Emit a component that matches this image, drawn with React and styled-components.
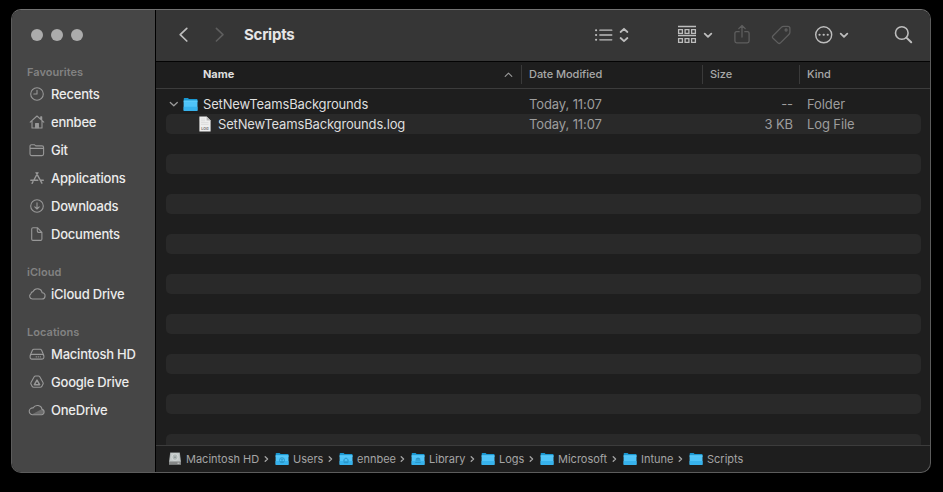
import React from "react";
import styled, { createGlobalStyle } from "styled-components";

const Global = createGlobalStyle`
  * { box-sizing: border-box; }
  html, body { margin: 0; background: #000; }
  body { font-family: Inter, "Liberation Sans", sans-serif; -webkit-font-smoothing: antialiased; overflow: hidden; }
  svg { display: block; flex: none; overflow: visible; }
`;

const Desktop = styled.div`
  width: 943px;
  height: 492px;
  padding: 9px 12px 19px 11px;
  background: #000;
`;

const Window = styled.div`
  width: 920px;
  height: 464px;
  display: flex;
  border: 1px solid #5c5c5c;
  border-top-color: #727272;
  border-radius: 10px;
  overflow: hidden;
  background: #1e1e1e;
`;

const Sidebar = styled.nav`
  width: 144px;
  flex: none;
  background: #464646;
  border-right: 1px solid #000;
`;

const Lights = styled.div`
  height: 38px;
  padding: 19px 0 0 19px;
  display: flex;
  gap: 8px;
`;

const Light = styled.span`
  width: 12px;
  height: 12px;
  border-radius: 50%;
  background: #acacac;
`;

const SectionTitle = styled.h2`
  margin: 0;
  padding: 16px 0 0 15px;
  height: 32px;
  line-height: 16px;
  font-size: 11px;
  font-weight: 600;
  letter-spacing: 0.04px;
  color: #828282;
`;

const Place = styled.div`
  height: 28px;
  padding-left: 15px;
  display: flex;
  align-items: center;
  gap: 4px;
  font-size: 13px;
  font-weight: 500;
  color: #ececec;
  white-space: nowrap;
  letter-spacing: -0.22px;
`;

const Main = styled.main`
  flex: 1;
  min-width: 0;
  display: flex;
  flex-direction: column;
`;

const Toolbar = styled.header`
  height: 52px;
  flex: none;
  padding: 0 17px 2px 22px;
  display: flex;
  align-items: center;
  background: #363636;
  border-bottom: 1px solid #040404;
`;

const Tool = styled.span`
  display: flex;
  margin-left: ${(p) => p.$gap || 0}px;
  color: ${(p) => (p.$dim ? "#5e5e5e" : "#bdbdbd")};
`;

const Disclosure = styled.span`
  display: flex;
  color: #9a9a9a;
`;

const Title = styled.h1`
  margin: 0 0 0 19px;
  width: 350px;
  font-size: 15px;
  line-height: 20px;
  font-weight: 700;
  letter-spacing: -0.25px;
  color: #e6e6e6;
`;

const columns = "365px 181px 97px 1fr";

const Header = styled.div`
  height: 27px;
  flex: none;
  display: grid;
  grid-template-columns: ${columns};
  border-bottom: 1px solid #3c3c3c;
  font-size: 11px;
  font-weight: 500;
  color: #a9a9a9;
`;

const HeadCell = styled.div`
  height: 19px;
  margin-top: 3px;
  padding: 0 0 1px 7px;
  display: flex;
  align-items: center;
  justify-content: space-between;
  border-left: 1px solid #3a3a3a;
  letter-spacing: -0.04px;
`;

const NameHead = styled(HeadCell)`
  padding: 0 8px 1px 47px;
  border-left: 0;
  font-weight: 700;
  color: #dedede;
`;

const Listing = styled.div`
  flex: 1;
  min-height: 0;
  overflow: hidden;
  padding: 5px 9px 0 10px;
`;

const Row = styled.div`
  height: 20px;
  display: grid;
  grid-template-columns: 363px 173px 91px 14px 1fr;
  align-items: center;
  border-radius: 5px;
  background: ${(p) => (p.$striped ? "#292929" : "transparent")};
  font-size: 13px;
  letter-spacing: -0.1px;
  color: #9d9d9d;
  white-space: nowrap;
`;

const NameCell = styled.div`
  display: flex;
  align-items: center;
  padding-left: ${(p) => (p.$child ? 33 : 3)}px;
  gap: ${(p) => (p.$child ? 7 : 5)}px;
  letter-spacing: -0.16px;
  color: #dedede;
`;

const Size = styled.div`
  text-align: right;
`;

const Kind = styled.div`
  grid-column: 5;
`;

const PathBar = styled.footer`
  height: 27px;
  flex: none;
  padding-left: 12px;
  display: flex;
  align-items: center;
  border-top: 1px solid #3c3c3c;
  font-size: 11px;
  color: #a5a5a5;
`;

const Crumb = styled.div`
  width: ${(p) => p.$width}px;
  flex: none;
  display: flex;
  align-items: center;
  white-space: nowrap;
  letter-spacing: 0;
`;

const CrumbLabel = styled.span`
  margin-left: 4px;
  padding-bottom: 1px;
  flex: 1;
`;

const CrumbArrow = styled.span`
  width: 11px;
  display: flex;
`;

const line = {
  fill: "none",
  stroke: "currentColor",
  strokeWidth: 1.1,
  strokeLinecap: "round",
  strokeLinejoin: "round",
};

const glyphs = {
  clock: (
    <>
      <circle cx="10" cy="10" r="6.3" />
      <path d="M10 6.2V10H6.8" />
    </>
  ),
  home: (
    <>
      <path d="M3.2 10.2 10 4l6.8 6.2M5 9v7h10V9M13.7 7V4.7h1V8" />
      <path d="M8.6 15.8v-4.2h2.8v4.2z" fill="currentColor" />
    </>
  ),
  folder: (
    <path d="M3 14.1V6.3q0-1.6 1.6-1.6h2.7l1.4 1.2h6.3q1.6 0 1.6 1.6v6.6q0 1.5-1.6 1.5H4.6Q3 15.6 3 14.1zM3 8.4h13.6" />
  ),
  apps: (
    <path
      strokeWidth="1.4"
      d="M9.1 4.7l5.8 10.5M10.9 4.7 6.9 12M6 13.7l-.9 1.6M3.8 12.2h7M13.6 12.2h2.7"
    />
  ),
  download: (
    <>
      <circle cx="10" cy="10" r="6.3" />
      <path d="M10 6.8v6M7.8 10.8l2.2 2.2 2.2-2.2" />
    </>
  ),
  doc: (
    <path d="M4.7 15V5q0-1.3 1.3-1.3h4.4l4.5 4.6V15q0 1.4-1.3 1.4H6Q4.7 16.4 4.7 15zM10.3 3.8v3.3q0 1.3 1.3 1.3h3.2" />
  ),
  cloud: (
    <path d="M5.6 15h9.1a3.1 3.1 0 0 0 .5-6.2 4.8 4.8 0 0 0-9.1-1.2 2.6 2.6 0 0 0-2.2 2.1A2.9 2.9 0 0 0 5.6 15z" />
  ),
  disk: (
    <>
      <path d="M3.3 11.2 5.4 6.3q.5-1 1.5-1h6.2q1 0 1.5 1l2.1 4.9" />
      <rect x="3.1" y="10.4" width="13.8" height="4.7" rx="1.8" />
      <path d="M9.2 12.8h5.6" strokeDasharray=".2 1.8" strokeWidth="1.2" />
    </>
  ),
  gdrive: (
    <>
      <path d="M8.6 4h2.8q.9 0 1.4.8l3.2 5.6q.5.9 0 1.7l-1.2 2.3q-.5.8-1.4.8H6.6q-.9 0-1.4-.8L4 12.1q-.5-.8 0-1.7l3.2-5.6Q7.7 4 8.6 4z" />
      <path d="M10 8.1l2.6 4.6H7.4z" strokeWidth="1.5" />
    </>
  ),
  onedrive: (
    <>
      <path d="M4.6 14.4 14.5 9.3a2.6 2.6 0 0 1 0 5.2z" fill="#6c6c6c" stroke="none" />
      <path d="M5.2 14.7h9.4a2.7 2.7 0 0 0 .5-5.3 4.9 4.9 0 0 0-9-1.5A3.4 3.4 0 0 0 5.2 14.7z" />
    </>
  ),
};

const PlaceIcon = styled.svg`
  color: #989898;
`;

function SidebarGlyph({ name }) {
  return (
    <PlaceIcon width="20" height="20" viewBox="0 0 20 20" {...line}>
      {glyphs[name]}
    </PlaceIcon>
  );
}

const sections = [
  {
    title: "Favourites",
    places: [
      ["clock", "Recents"],
      ["home", "ennbee"],
      ["folder", "Git"],
      ["apps", "Applications"],
      ["download", "Downloads"],
      ["doc", "Documents"],
    ],
  },
  { title: "iCloud", places: [["cloud", "iCloud Drive"]] },
  {
    title: "Locations",
    places: [
      ["disk", "Macintosh HD"],
      ["gdrive", "Google Drive"],
      ["onedrive", "OneDrive"],
    ],
  },
];

function Folder({ width = 14, height = 12, mark }) {
  return (
    <svg width={width} height={height} viewBox="0 0 14 12" preserveAspectRatio="none">
      <path d="M.7 3V.7q0-.7.7-.7h3.2l1 .9h7.2q.7 0 .7.7V4H.7z" fill="#1a98d2" />
      <path d="M.6 2.6h12.9v8.7q0 .6-.6.6H1.2q-.6 0-.6-.6z" fill="#4fc4f8" />
      <path d="M.6 8h12.9v3.3q0 .6-.6.6H1.2q-.6 0-.6-.6z" fill="#37b2ec" />
      <path d="M.6 2.8h12.9" stroke="#74d8ff" strokeWidth=".6" />
      {mark === "user" && (
        <g fill="none" stroke="#2790c2" strokeWidth=".8">
          <circle cx="7" cy="7.2" r="2.5" />
          <circle cx="7" cy="6.6" r=".7" />
          <path d="M5.4 8.9q1.6-1.5 3.2 0" />
        </g>
      )}
      {mark === "home" && (
        <path d="M4.3 7.2 7 4.9l2.7 2.3M5.1 7v2.7h3.8V7M7 9.6V7.9" fill="none" stroke="#2790c2" strokeWidth=".9" />
      )}
      {mark === "library" && (
        <path d="M4.8 6.2 7 4.9l2.2 1.3zM4.5 7.7h5M4.2 9.5h5.6" fill="#2790c2" stroke="#2790c2" strokeWidth=".8" />
      )}
    </svg>
  );
}

function Drive() {
  return (
    <svg width="14" height="14" viewBox="0 0 14 14">
      <path d="M2.2.6h9.6L13 9.6v2.9H1V9.6z" fill="#a4a9a9" />
      <path d="M2.8 1h8.4l1 8.3H1.8z" fill="#c4caca" />
      <ellipse cx="7" cy="5.1" rx="3" ry="3.3" fill="#b1b9b8" stroke="#dce0df" strokeWidth=".7" />
      <circle cx="7" cy="5.2" r=".8" fill="#858c8c" />
      <path d="M1 9.8h12v2.7H1z" fill="#858787" />
      <path d="M9.5 11.2h2" stroke="#e5e5e5" strokeWidth=".8" />
    </svg>
  );
}

const LogTag = styled.text`
  font: 700 3.6px Inter, sans-serif;
  letter-spacing: 0;
  fill: #727272;
`;

function LogFile() {
  return (
    <svg width="12" height="16" viewBox="0 0 12 16">
      <path d="M.4.6h7.2l4 4v10.8H.4z" fill="#eee" />
      <path d="M7.6.6v4h4z" fill="#b9b9b9" />
      <path d="M2 3h4M2 4.8h4M2 6.6h7.5M2 8.4h7.5" stroke="#d0d0d0" strokeWidth=".6" />
      <LogTag x="6" y="13.5" textAnchor="middle">LOG</LogTag>
    </svg>
  );
}

function Chevron({ w, h, d, weight = 1.5 }) {
  return (
    <svg width={w} height={h} viewBox={`0 0 ${w} ${h}`} {...line} strokeWidth={weight}>
      <path d={d} />
    </svg>
  );
}

const crumbs = [
  { label: "Macintosh HD", width: 107, mark: "drive" },
  { label: "Users", width: 64, mark: "user" },
  { label: "ennbee", width: 72, mark: "home" },
  { label: "Library", width: 70, mark: "library" },
  { label: "Logs", width: 59 },
  { label: "Microsoft", width: 83 },
  { label: "Intune", width: 66 },
  { label: "Scripts", width: 70 },
];

export default function App() {
  return (
    <Desktop>
      <Global />
      <Window>
        <Sidebar>
          <Lights>
            <Light />
            <Light />
            <Light />
          </Lights>
          {sections.map((s) => (
            <section key={s.title}>
              <SectionTitle>{s.title}</SectionTitle>
              {s.places.map(([icon, label]) => (
                <Place key={label}>
                  <SidebarGlyph name={icon} />
                  {label}
                </Place>
              ))}
            </section>
          ))}
        </Sidebar>
        <Main>
          <Toolbar>
            <Tool><Chevron w={11} h={16} d="M8.8 1.4 2.2 7.7l6.6 6.3" weight={1.7} /></Tool>
            <Tool $gap={25} $dim><Chevron w={11} h={16} d="M2.4 1.4 9 7.7l-6.6 6.3" weight={1.6} /></Tool>
            <Title>Scripts</Title>
            <Tool>
              <svg width="19" height="16" viewBox="0 0 19 16" {...line} strokeWidth="1.3">
                <path d="M5.8 3.2h12M5.8 8h12M5.8 12.8h12" />
                <path d="M2 3.2h.2M2 8h.2M2 12.8h.2" strokeWidth="2" />
              </svg>
            </Tool>
            <Tool $gap={6}><Chevron w={10} h={16} d="M1.6 5 5 1.8 8.4 5M1.6 11 5 14.2 8.4 11" weight={1.8} /></Tool>
            <Tool $gap={48}>
              <svg width="20" height="20" viewBox="0 0 20 20" {...line} strokeWidth="1.3" strokeLinecap="butt" strokeLinejoin="miter">
                <path d="M1 1.5h18M1 10.5h18" />
                <path d="M1.6 4.6h3.8v3.8H1.6zM8.1 4.6h3.8v3.8H8.1zM14.6 4.6h3.8v3.8h-3.8zM1.6 13.6h3.8v3.8H1.6zM8.1 13.6h3.8v3.8H8.1zM14.6 13.6h3.8v3.8h-3.8z" />
              </svg>
            </Tool>
            <Tool $gap={6}><Chevron w={10} h={8} d="M1.7 2.6 5 5.8 8.3 2.6" weight={1.8} /></Tool>
            <Tool $gap={21} $dim>
              <svg width="16" height="20" viewBox="0 0 16 20" {...line} strokeWidth="1.3">
                <path d="M5.2 6.7H2.6q-1.7 0-1.7 1.7v7.7q0 1.7 1.7 1.7h10.8q1.7 0 1.7-1.7V8.4q0-1.7-1.7-1.7h-2.6M8 12V.5M4.8 3.6 8 .5l3.2 3.1" />
              </svg>
            </Tool>
            <Tool $gap={21} $dim>
              <svg width="20" height="20" viewBox="0 0 20 20" {...line} strokeWidth="1.3">
                <path d="M1.8 11 10.6 2.1q.8-.8 2-.8h4.2q2.1 0 2.1 2.1V7.2q0 1.2-.8 2L9.2 18.1q-1 .9-2 0L1.8 13q-1-1 0-2z" />
                <circle cx="15.1" cy="5" r="1" />
              </svg>
            </Tool>
            <Tool $gap={23}>
              <svg width="20" height="20" viewBox="0 0 20 20" {...line} strokeWidth="1.4">
                <circle cx="9.7" cy="9.8" r="8" />
                <path d="M5.5 9.8h.1M9.6 9.8h.2M13.7 9.8h.1" strokeWidth="2.1" />
              </svg>
            </Tool>
            <Tool $gap={5}><Chevron w={10} h={8} d="M1.7 2.6 5 5.8 8.3 2.6" weight={1.8} /></Tool>
            <Tool $gap={45}>
              <svg width="19" height="20" viewBox="0 0 19 20" {...line} strokeWidth="1.6">
                <circle cx="7.8" cy="8" r="6.3" />
                <path d="M12.4 12.6l4.8 4.7" strokeWidth="2" />
              </svg>
            </Tool>
          </Toolbar>
          <Header>
            <NameHead>
              Name
              <Disclosure><Chevron w={9} h={8} d="M1.2 6.4 4.5 3.1 7.8 6.4" weight={1.1} /></Disclosure>
            </NameHead>
            <HeadCell>Date Modified</HeadCell>
            <HeadCell>Size</HeadCell>
            <HeadCell>Kind</HeadCell>
          </Header>
          <Listing>
            <Row>
              <NameCell>
                <Disclosure><Chevron w={9} h={8} d="M1.3 2.5 4.8 5.8 8.3 2.5" weight={1.3} /></Disclosure>
                <Folder width={15} height={13} />
                <span>SetNewTeamsBackgrounds</span>
              </NameCell>
              <div>Today, 11:07</div>
              <Size>--</Size>
              <Kind>Folder</Kind>
            </Row>
            <Row $striped>
              <NameCell $child>
                <LogFile />
                <span>SetNewTeamsBackgrounds.log</span>
              </NameCell>
              <div>Today, 11:07</div>
              <Size>3 KB</Size>
              <Kind>Log File</Kind>
            </Row>
            {Array.from({ length: 16 }, (_, i) => (
              <Row key={i} $striped={i % 2 === 1} />
            ))}
          </Listing>
          <PathBar>
            {crumbs.map((c, i) => (
              <Crumb key={c.label} $width={c.width}>
                {c.mark === "drive" ? <Drive /> : <Folder mark={c.mark} />}
                <CrumbLabel>{c.label}</CrumbLabel>
                {i < crumbs.length - 1 && (
                  <CrumbArrow>
                    <Chevron w={5} h={8} d="M1.2 1.8 3.6 4 1.2 6.2" weight={1.3} />
                  </CrumbArrow>
                )}
              </Crumb>
            ))}
          </PathBar>
        </Main>
      </Window>
    </Desktop>
  );
}
